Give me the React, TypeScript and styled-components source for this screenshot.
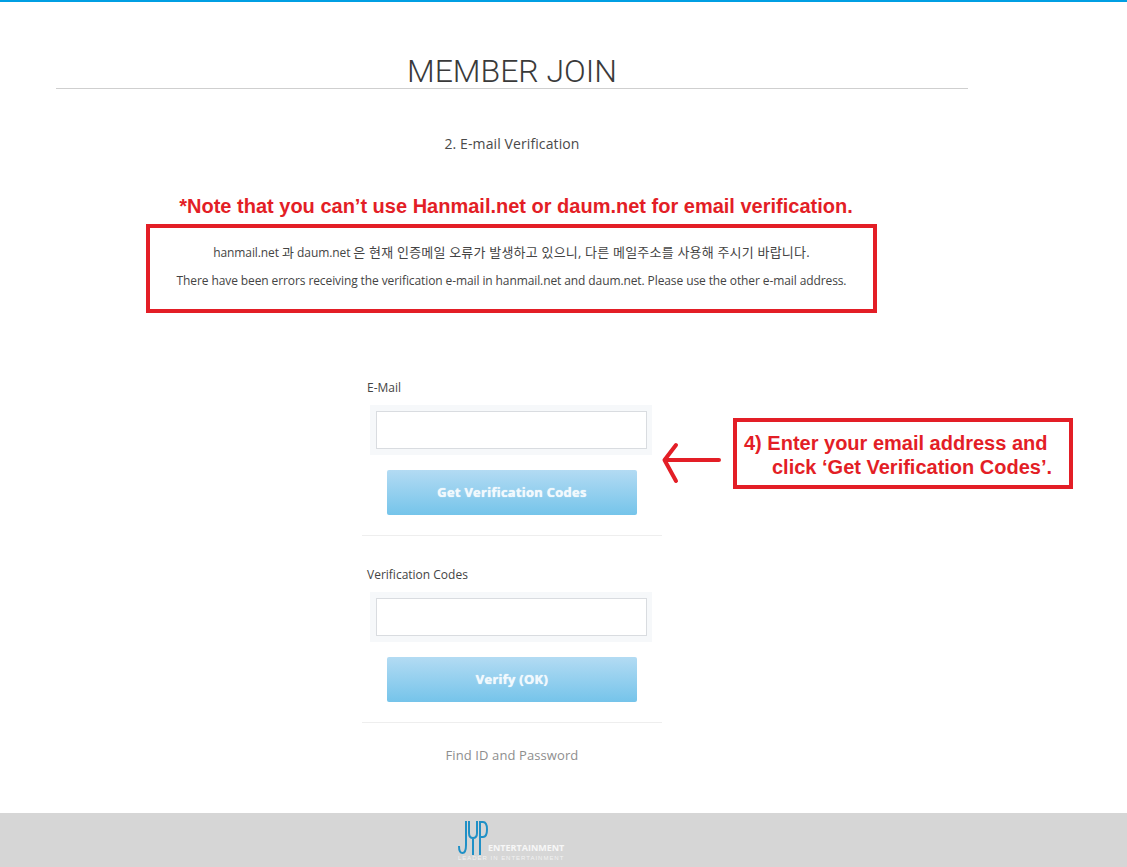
import styled, { createGlobalStyle } from "styled-components";

const RED = "#e31e26";
const BODY_FONT = `"Open Sans", "Noto Sans CJK KR", sans-serif`;

const GlobalStyle = createGlobalStyle`
  html, body {
    margin: 0;
    padding: 0;
    background: #fff;
    font-family: ${BODY_FONT};
    overflow: hidden;
  }
`;

const Page = styled.div`
  display: flex;
  flex-direction: column;
  height: 867px;
  border-top: 2px solid #009fe3;
  box-sizing: border-box;
`;

const Main = styled.main`
  flex: 1;
  display: flex;
  flex-direction: column;
  align-items: center;
  width: 912px;
  margin-left: 56px;
`;

const Title = styled.h1`
  width: 100%;
  height: 87px;
  box-sizing: border-box;
  margin: 0;
  padding-top: 46px;
  border-bottom: 1px solid #cfcfcf;
  font-family: Roboto, "Open Sans", sans-serif;
  font-size: 32px;
  line-height: 46px;
  font-weight: 300;
  color: #3a3a3a;
  text-align: center;
`;

const Step = styled.p`
  margin: 45px 0 0;
  font-size: 14px;
  line-height: 20px;
  color: #4a4a4a;
  letter-spacing: 0.1px;
`;

const NoteTitle = styled.p`
  margin: 40px 0 0 8px;
  font-family: "Liberation Sans", Arial, sans-serif;
  font-size: 20px;
  line-height: 24px;
  font-weight: 700;
  color: ${RED};
`;

const NoticeBox = styled.div`
  display: flex;
  flex-direction: column;
  align-items: center;
  gap: 9px;
  width: 731px;
  height: 89px;
  box-sizing: border-box;
  margin: 6px 0 0 -1px;
  padding-top: 15px;
  border: 4px solid ${RED};
  font-size: 12px;
  line-height: 19px;
  letter-spacing: -0.1px;
  color: #444;
`;

const Korean = styled.span`
  font-size: 13px;
  letter-spacing: 0.2px;
`;

const FormColumn = styled.section`
  position: relative;
  display: flex;
  flex-direction: column;
  width: 300px;
  margin-top: 65px;
`;

const FieldLabel = styled.label`
  display: block;
  padding: 1px 0 0 5px;
  font-size: 12px;
  line-height: 18px;
  color: #444;
`;

const InputWrap = styled.div`
  width: 282px;
  height: 50px;
  box-sizing: border-box;
  margin: 8px 0 0 8px;
  padding: 6px 5px 6px 6px;
  background: #f6f8fa;
`;

const TextInput = styled.input`
  display: block;
  width: 100%;
  height: 38px;
  box-sizing: border-box;
  border: 1px solid #d9dce0;
  background: #fff;
  outline: none;
`;

const SubmitButton = styled.button`
  display: block;
  width: 250px;
  height: 45px;
  margin: 15px 0 0 25px;
  padding: 0 0 2px;
  border: 0;
  border-radius: 2px;
  background: linear-gradient(#b3dbf3, #75c4ea);
  font-family: ${BODY_FONT};
  font-size: 13px;
  font-weight: 700;
  letter-spacing: 0.25px;
  color: #f1f9fd;
  text-shadow: 0 0 1px #fff;
`;

const Rule = styled.hr<{ $after: number }>`
  width: 100%;
  height: 1px;
  margin: 20px 0 ${(p) => p.$after}px;
  border: 0;
  background: #eeeeee;
`;

const FindLink = styled.a`
  display: block;
  font-size: 13px;
  line-height: 18px;
  color: #8e8e8e;
  text-align: center;
  letter-spacing: 0.1px;
`;

const Callout = styled.div`
  position: absolute;
  left: 371px;
  top: 40px;
  width: 340px;
  height: 71px;
  box-sizing: border-box;
  padding: 9px 0 0 7px;
  border: 4px solid ${RED};
  background: #fff;
  font-family: "Liberation Sans", Arial, sans-serif;
  font-size: 20px;
  line-height: 24px;
  font-weight: 700;
  color: ${RED};
  span {
    display: block;
  }
  span + span {
    padding-left: 28px;
  }
`;

const Arrow = styled.svg`
  position: absolute;
  left: 299px;
  top: 62px;
`;

const Footer = styled.footer`
  display: flex;
  justify-content: flex-start;
  height: 54px;
  padding-left: 458px;
  background: #d6d6d6;
`;

const Logo = styled.div`
  position: relative;
  width: 106px;
  height: 54px;
`;

const LogoMark = styled.svg`
  position: absolute;
  left: 0;
  top: 8px;
`;

const LogoName = styled.span`
  position: absolute;
  left: 30px;
  top: 29px;
  font-family: "Open Sans", Arial, sans-serif;
  font-size: 9px;
  line-height: 11px;
  font-weight: 700;
  color: #f6f6f6;
  white-space: nowrap;
`;

const LogoTag = styled.span`
  position: absolute;
  left: 0;
  top: 42px;
  font-family: "Liberation Sans", Arial, sans-serif;
  font-size: 6px;
  line-height: 7px;
  letter-spacing: 0.98px;
  color: #f2f2f2;
  white-space: nowrap;
`;

export default function App() {
  return (
    <Page>
      <GlobalStyle />
      <Main>
        <Title>MEMBER JOIN</Title>
        <Step>2. E-mail Verification</Step>
        <NoteTitle>*Note that you can’t use Hanmail.net or daum.net for email verification.</NoteTitle>
        <NoticeBox>
          <div>
            hanmail.net <Korean>과</Korean> daum.net{" "}
            <Korean>은 현재 인증메일 오류가 발생하고 있으니, 다른 메일주소를 사용해 주시기 바랍니다.</Korean>
          </div>
          <div>There have been errors receiving the verification e-mail in hanmail.net and daum.net. Please use the other e-mail address.</div>
        </NoticeBox>
        <FormColumn>
          <FieldLabel>E-Mail</FieldLabel>
          <InputWrap>
            <TextInput type="text" />
          </InputWrap>
          <SubmitButton type="button">Get Verification Codes</SubmitButton>
          <Rule $after={29} />
          <FieldLabel>Verification Codes</FieldLabel>
          <InputWrap>
            <TextInput type="text" />
          </InputWrap>
          <SubmitButton type="button">Verify (OK)</SubmitButton>
          <Rule $after={23} />
          <FindLink>Find ID and Password</FindLink>
          <Arrow width="62" height="44" viewBox="0 0 62 44" fill="none">
            <path
              d="M58 20H4M15 5 3.500 20 15 41"
              stroke={RED}
              strokeWidth="4"
              strokeLinecap="round"
              strokeLinejoin="round"
            />
          </Arrow>
          <Callout>
            <span>4) Enter your email address and</span>
            <span>click ‘Get Verification Codes’.</span>
          </Callout>
        </FormColumn>
      </Main>
      <Footer>
        <Logo>
          <LogoMark width="30" height="34" viewBox="0 0 30 34" fill="none" stroke="#2090c6" strokeWidth="2">
            <path d="M8 0V24Q8 32 4.500 32T1 25" />
            <path d="M11 0V12Q11 17 15 17T19 12V0M15 17V34" />
            <path d="M22 34V1H25Q29 1 29 8.500T25 16H22" />
          </LogoMark>
          <LogoName>ENTERTAINMENT</LogoName>
          <LogoTag>LEADER IN ENTERTAINMENT</LogoTag>
        </Logo>
      </Footer>
    </Page>
  );
}
